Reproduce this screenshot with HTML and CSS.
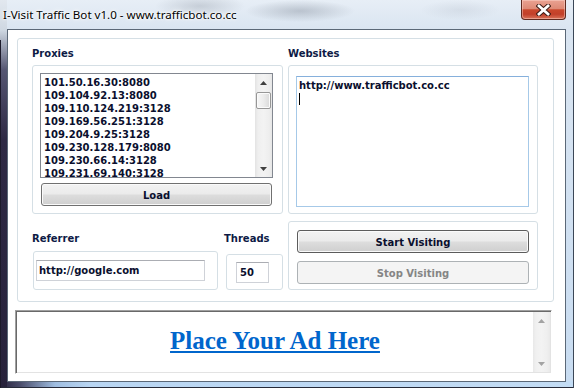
FILE: index.html
```html
<!DOCTYPE html>
<html>
<head>
<meta charset="utf-8">
<link rel="stylesheet" href="styles.css">
</head>
<body>
<div class="window">
  <div class="titlebar">
    <span class="title">I-Visit Traffic Bot v1.0 - www.trafficbot.co.cc</span>
    <div class="close">
      <svg width="15" height="12" viewBox="0 0 15 12">
        <path d="M3 2 L12 10 M12 2 L3 10" stroke="#3b1b15" stroke-width="4.8" stroke-linecap="square" fill="none"/>
        <path d="M3 2 L12 10 M12 2 L3 10" stroke="#ffffff" stroke-width="2.8" stroke-linecap="square" fill="none"/>
      </svg>
    </div>
  </div>
  <div class="client">
    <div class="panel">
      <div class="col">
        <div class="label">Proxies</div>
        <div class="group proxies">
          <div class="listbox">
            <div class="items">
              <div>101.50.16.30:8080</div>
              <div>109.104.92.13:8080</div>
              <div>109.110.124.219:3128</div>
              <div>109.169.56.251:3128</div>
              <div>109.204.9.25:3128</div>
              <div>109.230.128.179:8080</div>
              <div>109.230.66.14:3128</div>
              <div>109.231.69.140:3128</div>
            </div>
            <div class="vscroll">
              <div class="sb-btn"><svg width="7" height="4" viewBox="0 0 7 4"><path d="M0 4 L3.5 0 L7 4Z" fill="#404040"/></svg></div>
              <div class="sb-track"><div class="thumb"></div></div>
              <div class="sb-btn"><svg width="7" height="4" viewBox="0 0 7 4"><path d="M0 0 L3.5 4 L7 0Z" fill="#404040"/></svg></div>
            </div>
          </div>
          <div class="button load">Load</div>
        </div>
      </div>
      <div class="col">
        <div class="label">Websites</div>
        <div class="group websites">
          <div class="textarea">
            <div>http://www.trafficbot.co.cc</div>
            <div class="caret"></div>
          </div>
        </div>
      </div>
      <div class="row2-left">
        <div class="field">
          <div class="label small">Referrer</div>
          <div class="group ref-box"><div class="textbox ref-input">http://google.com</div></div>
        </div>
        <div class="field">
          <div class="label small">Threads</div>
          <div class="group threads-box"><div class="textbox threads-input">50</div></div>
        </div>
      </div>
      <div class="group actions">
        <div class="button start">Start Visiting</div>
        <div class="button stop">Stop Visiting</div>
      </div>
    </div>
    <div class="ad">
      <div class="ad-content"><a class="ad-link">Place Your Ad Here</a></div>
      <div class="vscroll disabled">
        <div class="sb-btn"><svg width="7" height="4" viewBox="0 0 7 4"><path d="M0 4 L3.5 0 L7 4Z" fill="#a3a3a3"/></svg></div>
        <div class="sb-track"></div>
        <div class="sb-btn"><svg width="7" height="4" viewBox="0 0 7 4"><path d="M0 0 L3.5 4 L7 0Z" fill="#a3a3a3"/></svg></div>
      </div>
    </div>
  </div>
</div>
</body>
</html>
```

FILE: styles.css
```css
* { box-sizing: border-box; }
html, body { margin: 0; padding: 0; }
body {
  width: 574px;
  height: 388px;
  overflow: hidden;
  font-family: "DejaVu Sans", sans-serif;
  background: #1c1a2a;
}

.window {
  width: 574px;
  height: 388px;
  display: flex;
  flex-direction: column;
  background:
    linear-gradient(to right, #1c1a2a 0, #1c1a2a 1px, transparent 1px) no-repeat 0 40px / 2px 100%,
    linear-gradient(to left, #3b4757 0, #3b4757 1px, transparent 1px) no-repeat 100% 0 / 2px 100%,
    linear-gradient(to top, #262a38 0, #262a38 1px, transparent 1px) no-repeat 0 100% / 100% 2px,
    linear-gradient(to bottom, #e2e8ef 0, #cfd8e2 30px, #555672 70px, #2e2944 140px, #27223b 100%) no-repeat 0 0 / 7px 100%,
    linear-gradient(to right, #27223b 0, #4a4c6a 20px, #9fbde0 55px, #b9d6f3 90px, #c3dcf4 100%) no-repeat 0 100% / 100% 7px,
    radial-gradient(ellipse 55px 11px at 300px 11px, rgba(110,120,135,0.35), rgba(110,120,135,0) 100%),
    radial-gradient(ellipse 45px 12px at 200px 6px, rgba(120,128,140,0.28), rgba(120,128,140,0) 100%),
    radial-gradient(ellipse 40px 10px at 460px 10px, rgba(150,160,175,0.18), rgba(150,160,175,0) 100%),
    linear-gradient(to bottom, #e7eef6 0, #dae5f1 29px, #c8dcf1 100%);
}

.titlebar {
  flex: none;
  height: 29px;
  display: flex;
  align-items: flex-start;
  justify-content: space-between;
}
.title {
  font-family: "Noto Sans", "Open Sans", sans-serif;
  font-size: 11.6px;
  line-height: 16px;
  margin: 7px 0 0 3px;
  color: #000;
  text-shadow: 0 0 6px #fff, 0 0 3px #fff, 0 0 2px #fff;
}
.close {
  width: 45px;
  height: 20px;
  margin-right: 8px;
  display: flex;
  align-items: center;
  justify-content: center;
  border: 1px solid #5e2a20;
  border-top: none;
  border-radius: 0 0 4px 4px;
  background: linear-gradient(to bottom, #eaa292 0%, #de8a76 45%, #c9472c 52%, #c2402a 75%, #d9735a 100%);
  box-shadow: inset 0 0 0 1px rgba(255, 220, 210, 0.45);
}

.client {
  flex: 1;
  margin: 0 8px 6px 7px;
  border: 1px solid #5b6877;
  background: #fff;
  padding: 8px 0 0 7px;
}

.panel {
  width: 537px;
  height: 264px;
  margin-left: 2px;
  border: 1px solid #d5dfe5;
  border-radius: 3px;
  padding: 7px 15px 11px 14px;
  display: grid;
  grid-template-columns: 251px 250px;
  grid-template-rows: 168px 69px;
  column-gap: 5px;
  row-gap: 7px;
}

.label {
  font-weight: bold;
  font-size: 10px;
  line-height: 14px;
  height: 19px;
  padding-top: 1px;
  color: #0d1a45;
}
.label.small { height: 14px; padding-top: 0; }

.group {
  border: 1px solid #d5dfe5;
  border-radius: 3px;
}

.proxies {
  height: 149px;
  padding: 7px 0 0 7px;
}
.listbox {
  width: 233px;
  height: 105px;
  border: 1px solid #828790;
  display: flex;
  background: #fff;
}
.items {
  flex: 1;
  padding: 2px 0 0 3px;
  overflow: hidden;
  font-weight: bold;
  font-size: 10px;
  line-height: 13px;
  color: #0a0f2e;
}

.vscroll {
  width: 17px;
  flex: none;
  display: flex;
  flex-direction: column;
  background: linear-gradient(to right, #e3e3e3 0, #efefef 3px, #f3f3f3 50%, #eeeeee 14px, #e6e6e6 100%);
}
.sb-btn {
  height: 17px;
  flex: none;
  display: flex;
  align-items: center;
  justify-content: center;
  padding-top: 1px;
}
.sb-track {
  flex: 1;
  padding: 1px 1px 0;
}
.thumb {
  height: 17px;
  border: 1px solid #979797;
  border-radius: 2px;
  background: linear-gradient(to right, #f7f7f7 0, #ececec 50%, #d9d9d9 100%);
  box-shadow: inset 0 0 0 1px #fbfbfb;
}

.button {
  display: flex;
  align-items: center;
  justify-content: center;
  padding-top: 1px;
  font-weight: bold;
  font-size: 10px;
  color: #0a0f2e;
  border: 1px solid #707070;
  border-radius: 3px;
  background: linear-gradient(to bottom, #f2f2f2 0%, #ebebeb 48%, #dddddd 52%, #cfcfcf 100%);
  box-shadow: inset 0 0 0 1px #fafafa;
}
.load {
  margin: 5px 0 0 1px;
  width: 231px;
  height: 23px;
}

.websites {
  height: 149px;
  padding: 10px 0 0 7px;
}
.textarea {
  width: 233px;
  height: 131px;
  border: 1px solid #a6c9e8;
  border-top-color: #86b0dc;
  padding: 2px;
  font-weight: bold;
  font-size: 10px;
  line-height: 13px;
  color: #0a0f2e;
}
.caret {
  width: 1px;
  height: 12px;
  margin-top: 1px;
  background: #000;
}

.row2-left {
  display: flex;
  gap: 6px;
  padding-top: 11px;
}
.field {
  display: flex;
  flex-direction: column;
}
.ref-box {
  margin: 5px 0 0 1px;
  width: 185px;
  height: 39px;
  padding: 8px 0 0 2px;
}
.threads-box {
  margin: 8px 0 0 2px;
  width: 57px;
  height: 36px;
  padding: 7px 0 0 9px;
}
.textbox {
  height: 21px;
  border: 1px solid #cfd2d8;
  border-top-color: #abadb3;
  line-height: 19px;
  font-weight: bold;
  font-size: 10px;
  color: #0a0f2e;
}
.ref-input { width: 169px; padding-left: 2px; }
.threads-input { width: 33px; padding-left: 3px; }

.actions {
  height: 69px;
  padding: 8px 0 0 8px;
}
.actions .button {
  width: 232px;
  height: 23px;
}
.start { border-color: #5c5c5c; }
.stop {
  margin-top: 8px;
  color: #858585;
  border-color: #adb2b5;
  background: #f4f4f4;
  box-shadow: none;
}

.ad {
  margin-top: 8px;
  width: 537px;
  height: 64px;
  border: 1px solid;
  border-color: #a0a0a0 #ffffff #ffffff #a0a0a0;
  padding: 1px;
  box-shadow: inset 1px 1px 0 #696969, inset -1px -1px 0 #e3e3e3;
  display: flex;
}
.ad-content {
  flex: 1;
  text-align: center;
  padding-top: 15px;
}
.ad-link {
  font-family: "Liberation Serif", "Times New Roman", serif;
  font-weight: bold;
  font-size: 25px;
  line-height: 28px;
  color: #0066cc;
  text-decoration: underline;
}
.vscroll.disabled {
  background: linear-gradient(to right, #e8e8e8 0, #f0f0f0 3px, #f3f3f3 50%, #efefef 14px, #e9e9e9 100%);
}
```
